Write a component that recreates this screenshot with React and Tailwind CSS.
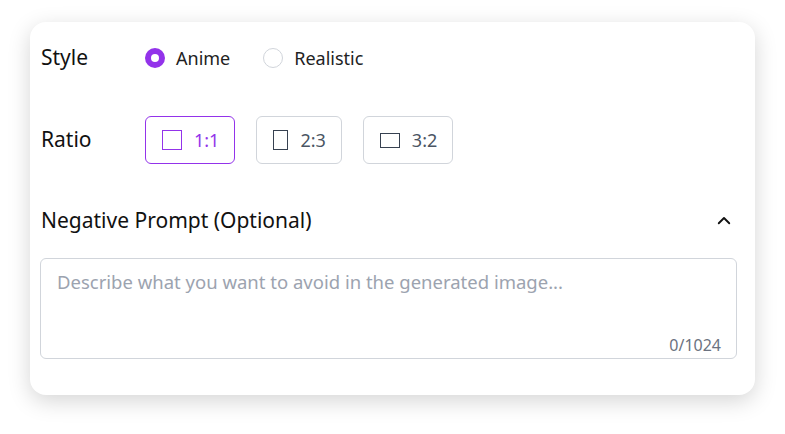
import { useState } from 'react';

const ratios = [
    { label: '1:1', w: 20, h: 20 },
    { label: '2:3', w: 15, h: 20 },
    { label: '3:2', w: 20, h: 15 },
];

const App = () => {
    const [style, setStyle] = useState('anime');
    const [ratio, setRatio] = useState('1:1');
    const [text, setText] = useState('');

    return (
        <div className="w-[785px] h-[434px] bg-white pt-[22px] pl-[30px] font-['Noto_Sans',sans-serif]">
            <div className="w-[725px] h-[373px] bg-white rounded-2xl shadow-[0_6px_22px_rgba(0,0,0,0.17)] pt-4 pl-[11px] pr-[18px]">
                {/* Style */}
                <div className="flex items-center h-10">
                    <div className="w-[104px] text-[21px] text-[#111]">Style</div>
                    {[['anime', 'Anime'], ['realistic', 'Realistic']].map(([key, name]) => (
                        <label key={key} onClick={() => setStyle(key)} className="flex items-center mr-[33px] cursor-pointer">
                            {style === key ? (
                                <span className="w-5 h-5 rounded-full bg-[#9333ea] flex items-center justify-center">
                                    <span className="w-2 h-2 rounded-full bg-white" />
                                </span>
                            ) : (
                                <span className="w-5 h-5 rounded-full border border-[#d1d5db]" />
                            )}
                            <span className="ml-[11px] text-[18px] text-[#222]">{name}</span>
                        </label>
                    ))}
                </div>

                {/* Ratio */}
                <div className="flex items-center mt-[38px] h-12">
                    <div className="w-[104px] text-[21px] text-[#111]">Ratio</div>
                    <div className="flex gap-[21px]">
                        {ratios.map(r => {
                            const active = ratio === r.label;
                            return (
                                <button
                                    key={r.label}
                                    onClick={() => setRatio(r.label)}
                                    className={`h-12 pl-4 pr-[15px] rounded-md border flex items-center gap-3 ${active ? 'border-[#9333ea] text-[#9333ea]' : 'border-[#d1d5db] text-[#4b5563]'}`}
                                >
                                    <span
                                        className={`border-[1.5px] ${active ? 'border-[#9333ea]' : 'border-[#374151]'}`}
                                        style={{ width: r.w, height: r.h }}
                                    />
                                    <span className="text-[18px]">{r.label}</span>
                                </button>
                            );
                        })}
                    </div>
                </div>

                {/* Negative prompt */}
                <div className="flex items-center justify-between mt-[45px] h-6">
                    <span className="text-[21px] text-[#111]">Negative Prompt (Optional)</span>
                    <svg width="18" height="18" viewBox="0 0 24 24" fill="none" stroke="#111" strokeWidth="2.5" strokeLinecap="round" strokeLinejoin="round" className="mr-[4px]">
                        <path d="m5 15 7-7 7 7" />
                    </svg>
                </div>

                <div className="relative mt-[25px] ml-[-1px] w-[697px] h-[101px]">
                    <textarea
                        value={text}
                        onChange={e => setText(e.target.value.slice(0, 1024))}
                        placeholder="Describe what you want to avoid in the generated image..."
                        className="w-full h-full resize-none rounded-md border border-[#d1d5db] px-4 py-[9px] text-[18.5px] text-[#111] placeholder:text-[#9ca3af] outline-none"
                    />
                    <span className="absolute right-4 bottom-[2px] text-[16px] text-[#6b7280]">{text.length}/1024</span>
                </div>
            </div>
        </div>
    );
};

export default App;
